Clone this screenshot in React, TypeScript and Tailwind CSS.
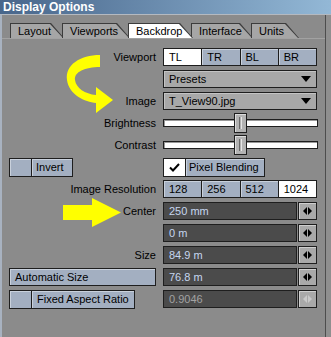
import React from "react";

const FONT = "font-[family-name:'Liberation_Sans',Arial,sans-serif]";

const TABS = [
  { label: "Layout", w: "w-[54px]", active: false },
  { label: "Viewports", w: "w-[68px]", active: false },
  { label: "Backdrop", w: "w-[65px]", active: true },
  { label: "Interface", w: "w-[62px]", active: false },
  { label: "Units", w: "w-[48px]", active: false },
];

const SLANT = "[clip-path:polygon(0_0,calc(100%-13px)_0,100%_100%,0_100%)]";

function Tab({ label, w, active }: { label: string; w: string; active: boolean }) {
  return (
    <div className={`relative -mr-[2px] h-[15px] ${w} ${active ? "z-10" : ""}`}>
      <div className={`absolute inset-0 bg-[#3c3c3c] ${SLANT}`} />
      <div
        className={`absolute left-[1px] right-[1px] top-[1px] bottom-0 ${SLANT} ${
          active ? "bg-white" : "bg-[#a6a6a6]"
        }`}
      />
      <span className="relative block pl-[8px] leading-[16px]">{label}</span>
    </div>
  );
}

function Row({ label, children }: { label?: string; children: React.ReactNode }) {
  return (
    <div className="flex h-[18px] items-center">
      <div className="w-[154px] text-right">{label}</div>
      <div className="ml-[7px] flex items-center">{children}</div>
    </div>
  );
}

function Segmented({ items, active }: { items: string[]; active: number }) {
  return (
    <div className="grid h-[18px] w-[154px] grid-cols-4 border border-[#1e1e1e] bg-[#1e1e1e] gap-px">
      {items.map((it, i) => (
        <div
          key={it}
          className={`pl-[5px] leading-[16px] ${
            i === active ? "bg-white" : "bg-[#a3afc1] shadow-[inset_1px_1px_0_#c9d1dc]"
          }`}
        >
          {it}
        </div>
      ))}
    </div>
  );
}

function Dropdown({ value }: { value: string }) {
  return (
    <div className="flex h-[18px] w-[154px] items-center justify-between border border-[#1e1e1e] bg-[#a8a8a8] pl-[5px] pr-[5px] shadow-[inset_1px_1px_0_#c4c4c4]">
      <span>{value}</span>
      <svg width="10" height="6" viewBox="0 0 10 6">
        <polygon points="0,0 10,0 5,6" fill="#000" />
      </svg>
    </div>
  );
}

function Slider() {
  return (
    <div className="relative h-[8px] w-[155px] border border-[#1e1e1e] bg-white shadow-[inset_1px_1px_0_#9a9a9a]">
      <div className="absolute left-[70px] top-1/2 h-[20px] w-[13px] -translate-y-1/2 border border-[#1e1e1e] bg-[#b3b3b3] shadow-[inset_1px_1px_0_#dcdcdc]">
        <div className="absolute bottom-[3px] left-[4px] top-[3px] w-[3px] border-l border-r border-l-[#6a6a6a] border-r-[#e6e6e6]" />
      </div>
    </div>
  );
}

function Spin({ disabled }: { disabled?: boolean }) {
  const c = disabled ? "#c9c9c9" : "#000";
  return (
    <div className="ml-[1px] flex h-[18px] w-[19px] items-center justify-center border border-[#1e1e1e] bg-[#a9a9a9] shadow-[inset_1px_1px_0_#cfcfcf]">
      <svg width="9" height="8" viewBox="0 0 9 8">
        <polygon points="0,4 4,0 4,8" fill={c} />
        <polygon points="5,0 9,4 5,8" fill={c} />
      </svg>
    </div>
  );
}

function NumField({ value, disabled }: { value: string; disabled?: boolean }) {
  return (
    <>
      <div
        className={`h-[18px] w-[134px] border border-[#1e1e1e] bg-[#4b4b4b] pl-[5px] leading-[16px] ${
          disabled ? "text-[#a2a2a2]" : "text-[#c6d6ef]"
        }`}
      >
        {value}
      </div>
      <Spin disabled={disabled} />
    </>
  );
}

function CheckButton({ label, w, checked, textPad }: { label: string; w: string; checked?: boolean; textPad: string }) {
  return (
    <div className={`flex h-[19px] ${w} border border-[#1e1e1e] bg-[#1e1e1e] gap-px`}>
      <div
        className={`flex w-[21px] items-center justify-center ${
          checked ? "bg-white" : "bg-[#a3afc1] shadow-[inset_1px_1px_0_#c9d1dc]"
        }`}
      >
        {checked && (
          <svg width="11" height="9" viewBox="0 0 11 9">
            <polyline points="1,4.5 4,7.5 10,1" fill="none" stroke="#000" strokeWidth="2" />
          </svg>
        )}
      </div>
      <div className={`flex-1 bg-[#a3afc1] ${textPad} leading-[17px] shadow-[inset_1px_1px_0_#c9d1dc]`}>
        {label}
      </div>
    </div>
  );
}

export default function App() {
  return (
    <div className={`relative h-[337px] w-[331px] overflow-hidden bg-[#8b8b8b] text-[11px] text-black ${FONT}`}>
      <div className="h-[14px] bg-linear-to-r from-[#48668b] to-[#93b8d6] pl-[3px] text-[12px] font-bold leading-[14px] text-white">
        Display Options
      </div>
      <div className="flex h-[323px] border-t border-[#b4b9c0]">
        <div className="w-[2px] bg-[#a8b2c0]" />
        <div className="w-[323px]">
          <div className="mt-[8px] flex pl-[8px]">
            {TABS.map((t) => (
              <Tab key={t.label} {...t} />
            ))}
          </div>
          <div className="flex flex-col gap-[4px] border-t border-[#a2a2a2] pt-[9px]">
            <Row label="Viewport">
              <Segmented items={["TL", "TR", "BL", "BR"]} active={0} />
            </Row>
            <Row>
              <Dropdown value="Presets" />
            </Row>
            <Row label="Image">
              <Dropdown value="T_View90.jpg" />
            </Row>
            <Row label="Brightness">
              <Slider />
            </Row>
            <Row label="Contrast">
              <Slider />
            </Row>
            <div className="flex h-[18px] items-center pl-[7px]">
              <CheckButton label="Invert" w="w-[64px]" textPad="pl-[4px]" />
              <div className="ml-[90px]">
                <CheckButton label="Pixel Blending" w="w-[102px]" checked textPad="pl-[3px]" />
              </div>
            </div>
            <Row label="Image Resolution">
              <Segmented items={["128", "256", "512", "1024"]} active={3} />
            </Row>
            <Row label="Center">
              <NumField value="250 mm" />
            </Row>
            <Row>
              <NumField value="0 m" />
            </Row>
            <Row label="Size">
              <NumField value="84.9 m" />
            </Row>
            <div className="flex h-[18px] items-center pl-[7px]">
              <div className="h-[18px] w-[147px] border border-[#1e1e1e] bg-[#a3afc1] pl-[5px] leading-[16px] shadow-[inset_1px_1px_0_#c9d1dc]">
                Automatic Size
              </div>
              <div className="ml-[7px] flex items-center">
                <NumField value="76.8 m" />
              </div>
            </div>
            <div className="flex h-[18px] items-center pl-[7px]">
              <CheckButton label="Fixed Aspect Ratio" w="w-[126px]" textPad="pl-[5px]" />
              <div className="ml-[28px] flex items-center">
                <NumField value="0.9046" disabled />
              </div>
            </div>
          </div>
        </div>
        <div className="w-[1px] bg-[#4d4d4d]" />
        <div className="flex-1 bg-[#8f8f8f]" />
      </div>

      <svg className="absolute left-[60px] top-[50px]" width="60" height="70" viewBox="0 0 60 70">
        <path
          d="M40 5 C20 5 5 15 7 30 C9 45 25 52 36 53 L36 63 L53 50 L36 37 L36 45 C25 44 16 38 15 30 C14 22 25 17 40 17 Z"
          fill="#ffff00"
        />
      </svg>
      <svg className="absolute left-[60px] top-[195px]" width="65" height="35" viewBox="0 0 65 35">
        <path d="M3 10 L32 10 L32 3 L61 17.5 L32 32 L32 25 L3 25 Z" fill="#ffff00" />
      </svg>
    </div>
  );
}
